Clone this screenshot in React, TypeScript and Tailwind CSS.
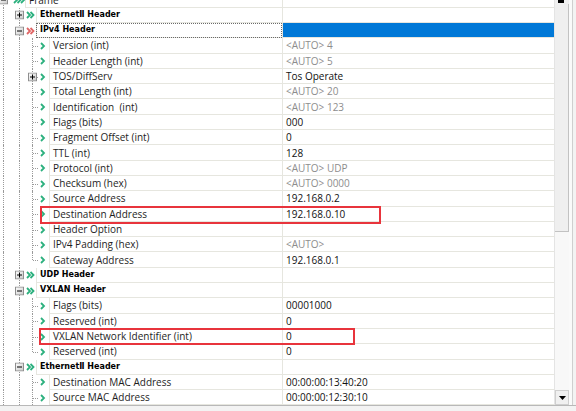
import React from "react";

type Row = {
  lvl: 0 | 1 | 2;
  name: string;
  value?: string;
  muted?: boolean;
  exp?: "+" | "-";
  red?: boolean;
  selected?: boolean;
  last?: boolean;
};

const rows: Row[] = [
  { lvl: 0, name: "Frame", exp: "-" },
  { lvl: 1, name: "EthernetⅡ Header", exp: "+" },
  { lvl: 1, name: "IPv4 Header", exp: "-", red: true, selected: true },
  { lvl: 2, name: "Version (int)", value: "<AUTO> 4", muted: true },
  { lvl: 2, name: "Header Length (int)", value: "<AUTO> 5", muted: true },
  { lvl: 2, name: "TOS/DiffServ", value: "Tos Operate", exp: "+" },
  { lvl: 2, name: "Total Length (int)", value: "<AUTO> 20", muted: true },
  { lvl: 2, name: "Identification  (int)", value: "<AUTO> 123", muted: true },
  { lvl: 2, name: "Flags (bits)", value: "000" },
  { lvl: 2, name: "Fragment Offset (int)", value: "0" },
  { lvl: 2, name: "TTL (int)", value: "128" },
  { lvl: 2, name: "Protocol (int)", value: "<AUTO> UDP", muted: true },
  { lvl: 2, name: "Checksum (hex)", value: "<AUTO> 0000", muted: true },
  { lvl: 2, name: "Source Address", value: "192.168.0.2" },
  { lvl: 2, name: "Destination Address", value: "192.168.0.10" },
  { lvl: 2, name: "Header Option", value: "" },
  { lvl: 2, name: "IPv4 Padding (hex)", value: "<AUTO>", muted: true },
  { lvl: 2, name: "Gateway Address", value: "192.168.0.1", last: true },
  { lvl: 1, name: "UDP Header", exp: "+" },
  { lvl: 1, name: "VXLAN Header", exp: "-" },
  { lvl: 2, name: "Flags (bits)", value: "00001000" },
  { lvl: 2, name: "Reserved (int)", value: "0" },
  { lvl: 2, name: "VXLAN Network Identifier (int)", value: "0" },
  { lvl: 2, name: "Reserved (int)", value: "0", last: true },
  { lvl: 1, name: "EthernetⅡ Header", exp: "-" },
  { lvl: 2, name: "Destination MAC Address", value: "00:00:00:13:40:20" },
  { lvl: 2, name: "Source MAC Address", value: "00:00:00:12:30:10" },
];

const GREEN = "#2cb07e";
const RED = "#e06666";

function Expander({ sign }: { sign: "+" | "-" }) {
  return (
    <svg width="9" height="9" viewBox="0 0 9 9" className="block">
      <defs>
        <linearGradient id="eg" x1="0" y1="0" x2="1" y2="1">
          <stop offset="0" stopColor="#ffffff" />
          <stop offset="1" stopColor="#c9c9c9" />
        </linearGradient>
      </defs>
      <rect x="0.5" y="0.5" width="8" height="8" fill="url(#eg)" stroke="#8e8e8e" />
      <rect x="2" y="4" width="5" height="1" fill="#000" />
      {sign === "+" && <rect x="4" y="2" width="1" height="5" fill="#000" />}
    </svg>
  );
}

function Chevrons({ n, color }: { n: number; color: string }) {
  const w = 4 + (n - 1) * 3.5 + 1;
  return (
    <svg width={w + 1} height="8" viewBox={`0 0 ${w + 1} 8`} className="block">
      {Array.from({ length: n }).map((_, i) => (
        <polyline
          key={i}
          points={`${1 + i * 3.5},1 ${4 + i * 3.5},4 ${1 + i * 3.5},7`}
          fill="none"
          stroke={color}
          strokeWidth="1.8"
        />
      ))}
    </svg>
  );
}

function Gutter({ r, idx }: { r: Row; idx: number }) {
  const w = r.lvl === 0 ? 25 : r.lvl === 1 ? 36 : 49;
  const dot = "absolute border-l border-dotted border-[#9a9a9a]";
  return (
    <div className="relative h-full shrink-0" style={{ width: w }}>
      <div className={`${dot} left-[3px] ${idx === 0 ? "top-1/2 bottom-0" : "top-0 bottom-0"}`} />
      {idx >= 1 && <div className={`${dot} left-[19px] top-0 bottom-0`} />}
      {r.lvl === 0 && (
        <>
          <div className="absolute left-[-1px] top-1/2 -translate-y-1/2">
            <Expander sign="-" />
          </div>
          <div className="absolute left-[13px] top-1/2 -translate-y-1/2">
            <Chevrons n={3} color={GREEN} />
          </div>
        </>
      )}
      {r.lvl === 1 && (
        <>
          <div className="absolute left-[15px] top-1/2 -translate-y-1/2">
            <Expander sign={r.exp || "+"} />
          </div>
          <div className="absolute left-[26px] top-1/2 -translate-y-1/2">
            <Chevrons n={2} color={r.red ? RED : GREEN} />
          </div>
        </>
      )}
      {r.lvl === 2 && (
        <>
          <div className={`${dot} left-[32px] top-0 ${r.last ? "h-1/2" : "bottom-0"}`} />
          <div className="absolute left-[33px] top-1/2 w-[5px] border-t border-dotted border-[#9a9a9a]" />
          {r.exp && (
            <div className="absolute left-[28px] top-1/2 -translate-y-1/2">
              <Expander sign={r.exp} />
            </div>
          )}
          <div className="absolute left-[40px] top-1/2 -translate-y-1/2">
            <Chevrons n={1} color={GREEN} />
          </div>
        </>
      )}
    </div>
  );
}

function TreeRow({ r, idx }: { r: Row; idx: number }) {
  const header = r.lvl === 1;
  return (
    <div className="flex h-[15.3px] shrink-0">
      <Gutter r={r} idx={idx} />
      <div
        className={`flex h-full flex-1 items-center border-b border-l border-[#e6e6df] pl-[3px] ${
          r.selected ? "outline outline-1 outline-dotted outline-[#6a6a6a] -outline-offset-1" : ""
        }`}
      >
        {header ? (
          <span
            className="whitespace-pre text-[8px] font-bold leading-none text-black"
            style={{ fontFamily: '"DejaVu Sans", "Noto Sans CJK SC", sans-serif' }}
          >
            {r.name}
          </span>
        ) : (
          <span className="whitespace-pre text-[10px] leading-none text-[#1e1e1e]">{r.name}</span>
        )}
      </div>
      <div
        className={`flex h-full w-[272px] shrink-0 items-center border-b border-l border-[#e6e6df] pl-[3px] ${
          r.selected ? "bg-[#0078d7]" : ""
        }`}
      >
        <span className={`whitespace-pre text-[10px] leading-none ${r.muted ? "text-[#8d8d8d]" : "text-[#111]"}`}>
          {r.value}
        </span>
      </div>
    </div>
  );
}

export default function App() {
  return (
    <div
      className="relative h-[411px] w-[576px] overflow-hidden bg-white"
      style={{ fontFamily: '"Open Sans", "Noto Sans", sans-serif' }}
    >
      <div className="flex h-[405px]">
        <div className="relative h-full w-[554px] overflow-hidden">
          <div className="mt-[-7.6px] flex flex-col">
            {rows.map((r, i) => (
              <TreeRow key={i} r={r} idx={i} />
            ))}
          </div>
          <div className="absolute left-[40px] top-[206px] h-[18px] w-[341px] border-2 border-[#e8343c]" />
          <div className="absolute left-[39px] top-[328px] h-[17px] w-[316px] border-2 border-[#e8343c]" />
        </div>
        <div className="flex h-full w-[15px] flex-col border-l border-[#e4e4e4] bg-[#f7f7f7]">
          <div className="relative h-[4px] shrink-0 bg-[#f0f0f0]">
            <div className="absolute left-[3px] top-0 h-[3px] w-[6px] bg-black" />
          </div>
          <div className="h-[228px] shrink-0 border-b border-r border-[#c2c2c2] bg-[#efefef]" />
          <div className="flex-1 bg-[#f8f8f8]" />
          <div className="flex h-[15px] shrink-0 items-center justify-center border border-[#cfcfcf] bg-[#f0f0f0]">
            <svg width="7" height="4" viewBox="0 0 7 4">
              <polygon points="0,0 7,0 3.5,4" fill="#000" />
            </svg>
          </div>
        </div>
        <div className="flex h-full w-[7px]">
          <div className="w-[3px] bg-[#fafafa]" />
          <div className="w-[1px] bg-[#cfcfcf]" />
          <div className="flex-1 bg-[#f3f3f3]" />
        </div>
      </div>
      <div className="h-[6px] border-t border-[#b8b8b8] bg-[#f3f3f3]" />
    </div>
  );
}
